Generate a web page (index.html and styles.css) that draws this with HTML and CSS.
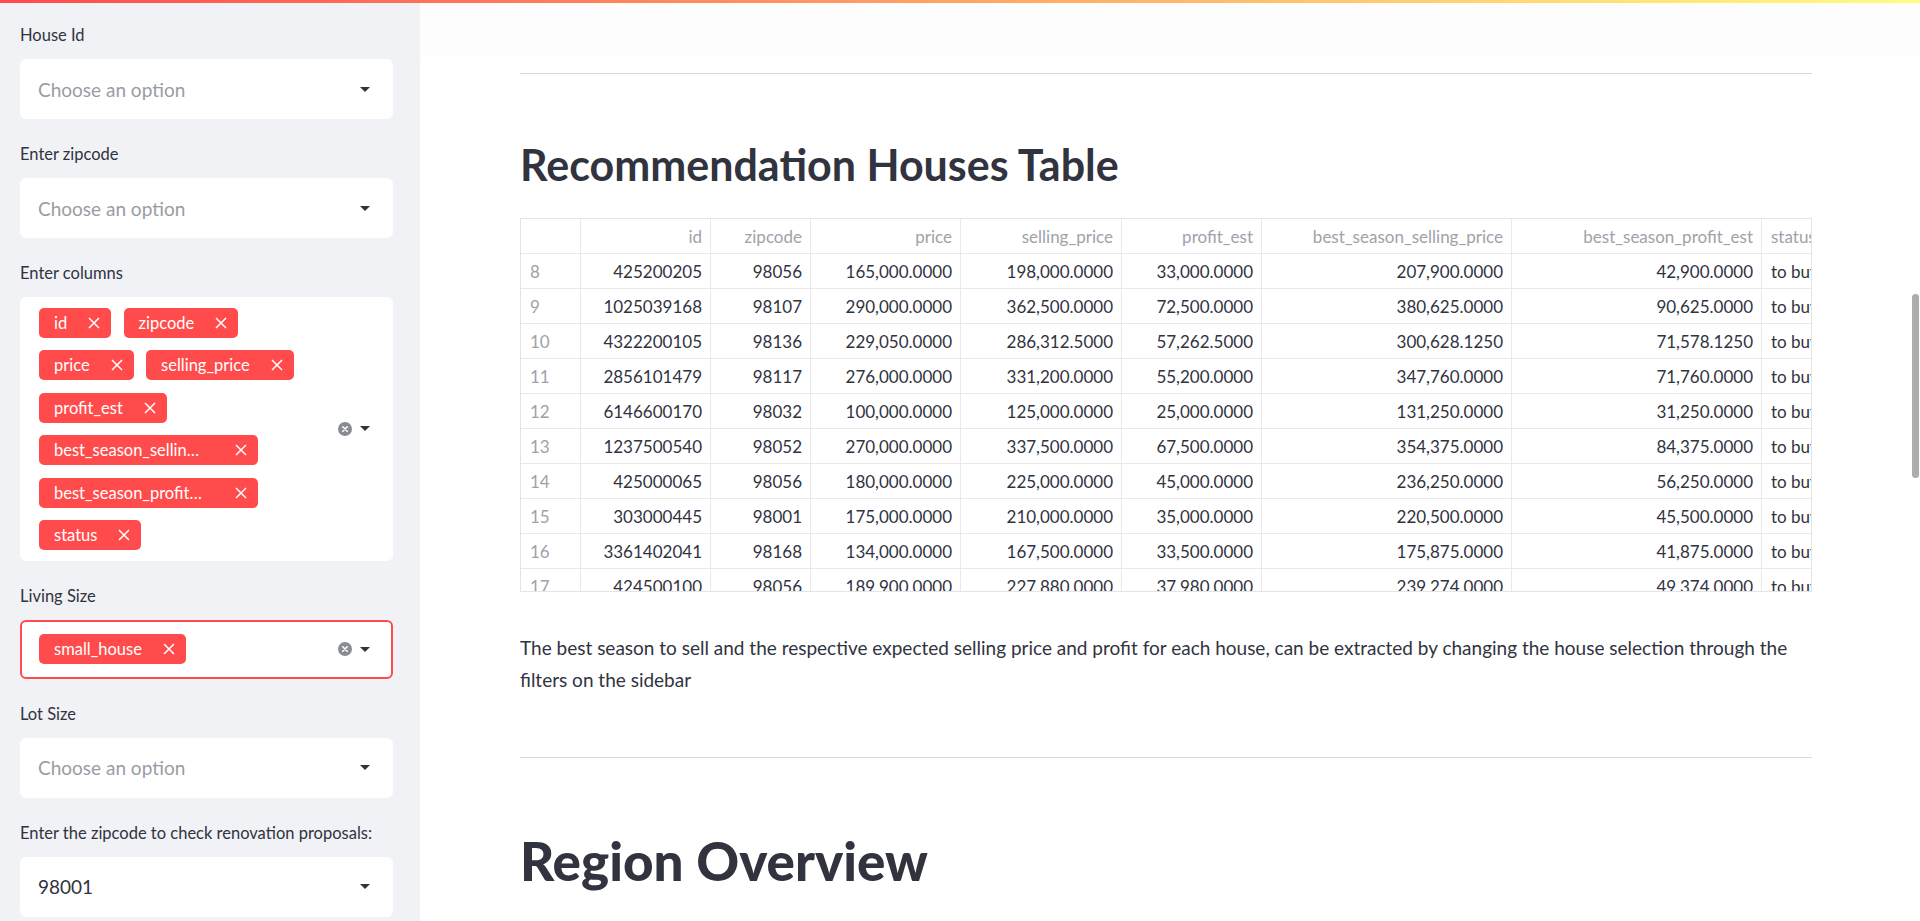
FILE: index.html
```html
<!DOCTYPE html>
<html lang="en">
<head>
<meta charset="utf-8">
<title>House Rocket</title>
<link rel="stylesheet" href="styles.css">
</head>
<body>
<div class="decoration"></div>
<div class="app">
  <aside class="sidebar">
    <div class="widget">
      <div class="wlabel">House Id</div>
      <div class="select">
        <span class="placeholder">Choose an option</span>
        <span class="icons"><svg class="caret" viewBox="0 0 10 5"><polygon points="0,0 10,0 5,5"/></svg></span>
      </div>
    </div>
    <div class="widget">
      <div class="wlabel">Enter zipcode</div>
      <div class="select">
        <span class="placeholder">Choose an option</span>
        <span class="icons"><svg class="caret" viewBox="0 0 10 5"><polygon points="0,0 10,0 5,5"/></svg></span>
      </div>
    </div>
    <div class="widget">
      <div class="wlabel">Enter columns</div>
      <div class="select multi">
        <div class="tags">
          <span class="tag"><span class="t">id</span><svg class="tx" viewBox="0 0 12 12"><path d="M1 1L11 11M11 1L1 11"/></svg></span>
          <span class="tag"><span class="t">zipcode</span><svg class="tx" viewBox="0 0 12 12"><path d="M1 1L11 11M11 1L1 11"/></svg></span>
          <span class="tag"><span class="t">price</span><svg class="tx" viewBox="0 0 12 12"><path d="M1 1L11 11M11 1L1 11"/></svg></span>
          <span class="tag"><span class="t">selling_price</span><svg class="tx" viewBox="0 0 12 12"><path d="M1 1L11 11M11 1L1 11"/></svg></span>
          <span class="tag"><span class="t">profit_est</span><svg class="tx" viewBox="0 0 12 12"><path d="M1 1L11 11M11 1L1 11"/></svg></span>
          <span class="tag"><span class="t trunc">best_season_selling_price</span><svg class="tx wide" viewBox="0 0 12 12"><path d="M1 1L11 11M11 1L1 11"/></svg></span>
          <span class="tag"><span class="t trunc">best_season_profit_est</span><svg class="tx wide" viewBox="0 0 12 12"><path d="M1 1L11 11M11 1L1 11"/></svg></span>
          <span class="tag"><span class="t">status</span><svg class="tx" viewBox="0 0 12 12"><path d="M1 1L11 11M11 1L1 11"/></svg></span>
        </div>
        <span class="icons">
          <svg class="clear" viewBox="0 0 14 14"><circle cx="7" cy="7" r="7"/><path d="M4.8 4.8L9.2 9.2M9.2 4.8L4.8 9.2"/></svg>
          <svg class="caret" viewBox="0 0 10 5"><polygon points="0,0 10,0 5,5"/></svg>
        </span>
      </div>
    </div>
    <div class="widget">
      <div class="wlabel">Living Size</div>
      <div class="select multi focused">
        <div class="tags single">
          <span class="tag"><span class="t">small_house</span><svg class="tx" viewBox="0 0 12 12"><path d="M1 1L11 11M11 1L1 11"/></svg></span>
        </div>
        <span class="icons">
          <svg class="clear" viewBox="0 0 14 14"><circle cx="7" cy="7" r="7"/><path d="M4.8 4.8L9.2 9.2M9.2 4.8L4.8 9.2"/></svg>
          <svg class="caret" viewBox="0 0 10 5"><polygon points="0,0 10,0 5,5"/></svg>
        </span>
      </div>
    </div>
    <div class="widget">
      <div class="wlabel">Lot Size</div>
      <div class="select">
        <span class="placeholder">Choose an option</span>
        <span class="icons"><svg class="caret" viewBox="0 0 10 5"><polygon points="0,0 10,0 5,5"/></svg></span>
      </div>
    </div>
    <div class="widget">
      <div class="wlabel">Enter the zipcode to check renovation proposals:</div>
      <div class="select">
        <span class="value">98001</span>
        <span class="icons"><svg class="caret" viewBox="0 0 10 5"><polygon points="0,0 10,0 5,5"/></svg></span>
      </div>
    </div>
  </aside>

  <main class="main">
    <div class="header-band"></div>
    <div class="block">
      <hr class="rule first">
      <h2 class="h2">Recommendation Houses Table</h2>
      <div class="tablewrap">
        <table class="df">
          <thead>
            <tr>
              <th class="c0 idx"></th><th class="c1">id</th><th class="c2">zipcode</th><th class="c3">price</th><th class="c4">selling_price</th><th class="c5">profit_est</th><th class="c6">best_season_selling_price</th><th class="c7">best_season_profit_est</th><th class="c8 left">status</th>
            </tr>
          </thead>
          <tbody>
            <tr><td class="idx">8</td><td>425200205</td><td>98056</td><td>165,000.0000</td><td>198,000.0000</td><td>33,000.0000</td><td>207,900.0000</td><td>42,900.0000</td><td class="left">to buy</td></tr>
            <tr><td class="idx">9</td><td>1025039168</td><td>98107</td><td>290,000.0000</td><td>362,500.0000</td><td>72,500.0000</td><td>380,625.0000</td><td>90,625.0000</td><td class="left">to buy</td></tr>
            <tr><td class="idx">10</td><td>4322200105</td><td>98136</td><td>229,050.0000</td><td>286,312.5000</td><td>57,262.5000</td><td>300,628.1250</td><td>71,578.1250</td><td class="left">to buy</td></tr>
            <tr><td class="idx">11</td><td>2856101479</td><td>98117</td><td>276,000.0000</td><td>331,200.0000</td><td>55,200.0000</td><td>347,760.0000</td><td>71,760.0000</td><td class="left">to buy</td></tr>
            <tr><td class="idx">12</td><td>6146600170</td><td>98032</td><td>100,000.0000</td><td>125,000.0000</td><td>25,000.0000</td><td>131,250.0000</td><td>31,250.0000</td><td class="left">to buy</td></tr>
            <tr><td class="idx">13</td><td>1237500540</td><td>98052</td><td>270,000.0000</td><td>337,500.0000</td><td>67,500.0000</td><td>354,375.0000</td><td>84,375.0000</td><td class="left">to buy</td></tr>
            <tr><td class="idx">14</td><td>425000065</td><td>98056</td><td>180,000.0000</td><td>225,000.0000</td><td>45,000.0000</td><td>236,250.0000</td><td>56,250.0000</td><td class="left">to buy</td></tr>
            <tr><td class="idx">15</td><td>303000445</td><td>98001</td><td>175,000.0000</td><td>210,000.0000</td><td>35,000.0000</td><td>220,500.0000</td><td>45,500.0000</td><td class="left">to buy</td></tr>
            <tr><td class="idx">16</td><td>3361402041</td><td>98168</td><td>134,000.0000</td><td>167,500.0000</td><td>33,500.0000</td><td>175,875.0000</td><td>41,875.0000</td><td class="left">to buy</td></tr>
            <tr><td class="idx">17</td><td>424500100</td><td>98056</td><td>189,900.0000</td><td>227,880.0000</td><td>37,980.0000</td><td>239,274.0000</td><td>49,374.0000</td><td class="left">to buy</td></tr>
            <tr><td class="idx">18</td><td>1623049041</td><td>98168</td><td>82,500.0000</td><td>103,125.0000</td><td>20,625.0000</td><td>108,281.2500</td><td>25,781.2500</td><td class="left">to buy</td></tr>
          </tbody>
        </table>
      </div>
      <p class="text">The best season to sell and the respective expected selling price and profit for each house, can be extracted by changing the house selection through the filters on the sidebar</p>
      <hr class="rule second">
      <h1 class="h1">Region Overview</h1>
    </div>
    <div class="scrollbar"></div>
  </main>
</div>
</body>
</html>
```
FILE: styles.css
```css
* { box-sizing: border-box; }
html, body { margin: 0; padding: 0; height: 100%; overflow: hidden; }
body {
  font-family: Lato, "Source Sans Pro", "Noto Sans", sans-serif;
  color: #31333f;
  background: #ffffff;
}
.decoration {
  position: absolute; top: 0; left: 0; right: 0; height: 3px;
  background: linear-gradient(90deg, #ff4b4b, #fffd80);
  z-index: 10;
}
.app { display: flex; height: 921px; }

/* Sidebar */
.sidebar {
  width: 420px; flex: none; background: #f0f2f6;
  padding: 23px 27px 0 20px;
  display: flex; flex-direction: column; gap: 23px;
  overflow: hidden;
}
.widget { display: flex; flex-direction: column; gap: 12px; }
.wlabel { font-size: 16.5px; line-height: 24px; height: 24px; white-space: nowrap; color: #31333f; }
.select {
  background: #fff; border: 1px solid #fff; border-radius: 6px;
  height: 60px; flex: none;
  display: flex; align-items: center; padding-left: 17px;
}
.select.multi { height: auto; padding-left: 18px; }
.select.focused { border: 2px solid #ff4b4b; padding-left: 17px; height: 59px; }
.placeholder { font-size: 19px; color: #9a9ca3; }
.value { font-size: 19px; color: #31333f; }
.icons { margin-left: auto; display: flex; align-items: center; gap: 8px; padding-right: 22px; flex: none; }
.focused .icons { padding-right: 21px; }
.caret { width: 10px; height: 5px; fill: #31333f; display: block; }
.clear { width: 14px; height: 14px; display: block; }
.clear circle { fill: #8a8c95; }
.clear path { stroke: #fff; stroke-width: 1.6; stroke-linecap: round; fill: none; }

.tags { display: flex; flex-wrap: wrap; gap: 12.4px; width: 292px; padding: 10px 0 10px; }
.tags.single { padding: 0; }
.tag {
  height: 30px; background: #ff4b4b; color: #fff; border-radius: 5px;
  display: inline-flex; align-items: center;
  padding: 0 11px 0 15px; font-size: 16.5px; white-space: nowrap;
}
.tag .t { white-space: nowrap; }
.tag .t.trunc { overflow: hidden; text-overflow: ellipsis; max-width: 150px; }
.tx { width: 12px; height: 12px; margin-left: 21px; display: block; }
.tx.wide { margin-left: 31px; }
.tx path { stroke: #fff; stroke-width: 1.5; fill: none; }

/* Main */
.main { flex: 1; position: relative; overflow: hidden; min-width: 0; }
.header-band { height: 57px; background: #fdfdfd; }
.block { padding: 0 108px 0 100px; }
.rule { border: 0; height: 1px; background: #d9d9dc; margin: 0; }
.rule.first { margin-top: 16px; }
.h2 { font-size: 43px; font-weight: 700; line-height: 54px; margin: 64px 0 0; color: #31333f; white-space: nowrap; }
.tablewrap { margin-top: 26px; height: 374px; border: 1px solid #e4e4e6; overflow: hidden; }
.df { border-collapse: separate; border-spacing: 0; table-layout: fixed; width: 1321px; font-size: 17px; }
.df th, .df td {
  height: 35px; padding: 0 8px 0 9px; border-right: 1px solid #e9e9eb; border-bottom: 1px solid #e9e9eb;
  text-align: right; font-weight: 400; white-space: nowrap; overflow: hidden; color: #31333f;
}
.df th { color: #a0a2a9; }
.df .idx { text-align: left; color: #a0a2a9; }
.df .left { text-align: left; }
.c0 { width: 60px; } .c1 { width: 130px; } .c2 { width: 100px; } .c3 { width: 150px; }
.c4 { width: 161px; } .c5 { width: 140px; } .c6 { width: 250px; } .c7 { width: 250px; } .c8 { width: 80px; }

.text { font-size: 19px; line-height: 32px; margin: 40px 0 0; color: #31333f; }
.rule.second { margin-top: 61px; }
.h1 { font-size: 53px; font-weight: 900; line-height: 66px; margin: 70px 0 0; color: #31333f; white-space: nowrap; }

.scrollbar {
  position: absolute; right: 1px; top: 294px; width: 7px; height: 184px;
  background: #acacae; border-radius: 4px;
}
```
